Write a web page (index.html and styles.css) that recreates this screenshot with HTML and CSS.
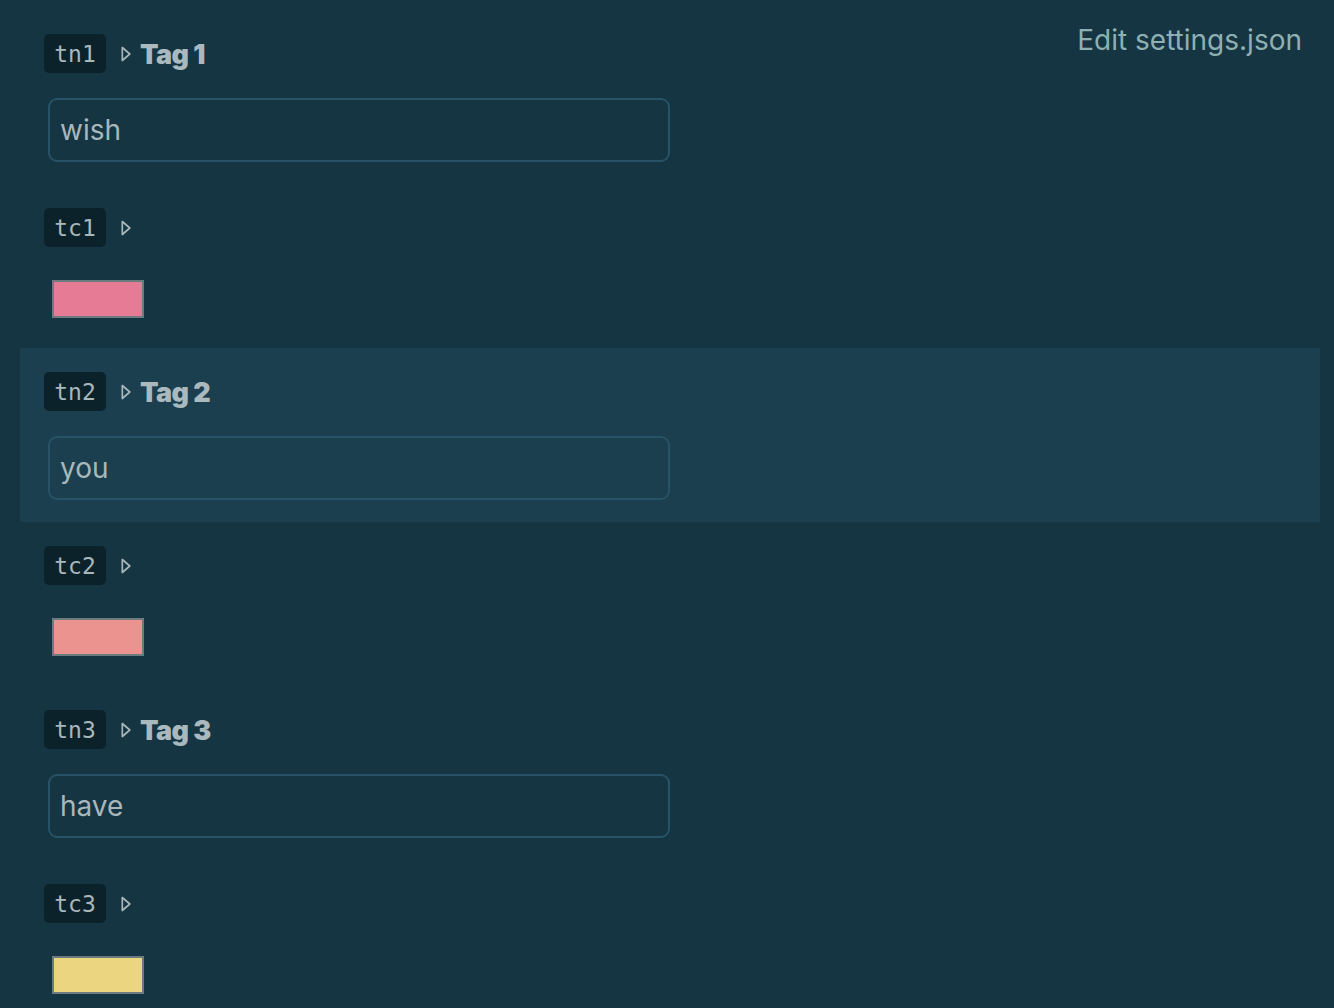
FILE: index.html
```html
<!DOCTYPE html>
<html>
<head>
<meta charset="utf-8">
<link rel="stylesheet" href="styles.css">
</head>
<body>
<div class="page">
  <a class="edit-link">Edit settings.json</a>
  <div class="list">
    <div class="item">
      <div class="head">
        <span class="key">tn1</span>
        <svg class="caret" width="10" height="16" viewBox="0 0 10 16"><polygon points="1.3,1.5 8.8,8 1.3,14.5" fill="none" stroke="currentColor" stroke-width="1.7" stroke-linejoin="round"/></svg>
        <span class="label">Tag 1</span>
      </div>
      <div class="field">wish</div>
    </div>
    <div class="item color">
      <div class="head">
        <span class="key">tc1</span>
        <svg class="caret" width="10" height="16" viewBox="0 0 10 16"><polygon points="1.3,1.5 8.8,8 1.3,14.5" fill="none" stroke="currentColor" stroke-width="1.7" stroke-linejoin="round"/></svg>
      </div>
      <div class="swatch" style="background:#e67b95"></div>
    </div>
    <div class="item active">
      <div class="head">
        <span class="key">tn2</span>
        <svg class="caret" width="10" height="16" viewBox="0 0 10 16"><polygon points="1.3,1.5 8.8,8 1.3,14.5" fill="none" stroke="currentColor" stroke-width="1.7" stroke-linejoin="round"/></svg>
        <span class="label">Tag 2</span>
      </div>
      <div class="field">you</div>
    </div>
    <div class="item color">
      <div class="head">
        <span class="key">tc2</span>
        <svg class="caret" width="10" height="16" viewBox="0 0 10 16"><polygon points="1.3,1.5 8.8,8 1.3,14.5" fill="none" stroke="currentColor" stroke-width="1.7" stroke-linejoin="round"/></svg>
      </div>
      <div class="swatch" style="background:#eb938f"></div>
    </div>
    <div class="item">
      <div class="head">
        <span class="key">tn3</span>
        <svg class="caret" width="10" height="16" viewBox="0 0 10 16"><polygon points="1.3,1.5 8.8,8 1.3,14.5" fill="none" stroke="currentColor" stroke-width="1.7" stroke-linejoin="round"/></svg>
        <span class="label">Tag 3</span>
      </div>
      <div class="field">have</div>
    </div>
    <div class="item color">
      <div class="head">
        <span class="key">tc3</span>
        <svg class="caret" width="10" height="16" viewBox="0 0 10 16"><polygon points="1.3,1.5 8.8,8 1.3,14.5" fill="none" stroke="currentColor" stroke-width="1.7" stroke-linejoin="round"/></svg>
      </div>
      <div class="swatch" style="background:#ecd580"></div>
    </div>
  </div>
</div>
</body>
</html>
```
FILE: styles.css
```css
html, body {
  margin: 0;
  padding: 0;
  background: #163543;
  height: 100%;
  overflow: hidden;
}
.page {
  position: relative;
  font-family: Inter, "Liberation Sans", sans-serif;
  color: #a9b8bc;
}
.edit-link {
  position: absolute;
  top: 22px;
  right: 32px;
  font-size: 28px;
  color: #8fb0b2;
  line-height: 36px;
}
.list {
  padding: 10px 14px 0 20px;
  display: flex;
  flex-direction: column;
}
.item {
  padding: 24px 24px 22px;
  display: flex;
  flex-direction: column;
  gap: 25px;
}
.item.color {
  padding-bottom: 30px;
  gap: 33px;
}
.item.active {
  background: #1b3f4f;
}
.head {
  display: flex;
  align-items: center;
  height: 39px;
}
.key {
  background: #0b222b;
  border-radius: 5px;
  height: 39px;
  width: 62px;
  box-sizing: border-box;
  display: flex;
  align-items: center;
  justify-content: center;
  font-family: "DejaVu Sans Mono", "Liberation Mono", monospace;
  font-size: 23px;
  color: #a9b7bb;
}
.caret {
  color: #a9b7bb;
  margin-left: 15px;
  margin-right: 9px;
}
.label {
  font-weight: 900;
  font-size: 27px;
  letter-spacing: -0.6px;
  color: #a9b9bd;
  margin-top: 2px;
}
.field {
  margin-left: 4px;
  width: 622px;
  height: 64px;
  box-sizing: border-box;
  border: 2px solid #285265;
  border-radius: 9px;
  padding: 0 10px;
  display: flex;
  align-items: center;
  font-size: 28px;
  color: #a8b7bb;
}
.swatch {
  margin-left: 8px;
  width: 92px;
  height: 38px;
  box-sizing: border-box;
  border: 2px solid #6b7b80;
}
```
